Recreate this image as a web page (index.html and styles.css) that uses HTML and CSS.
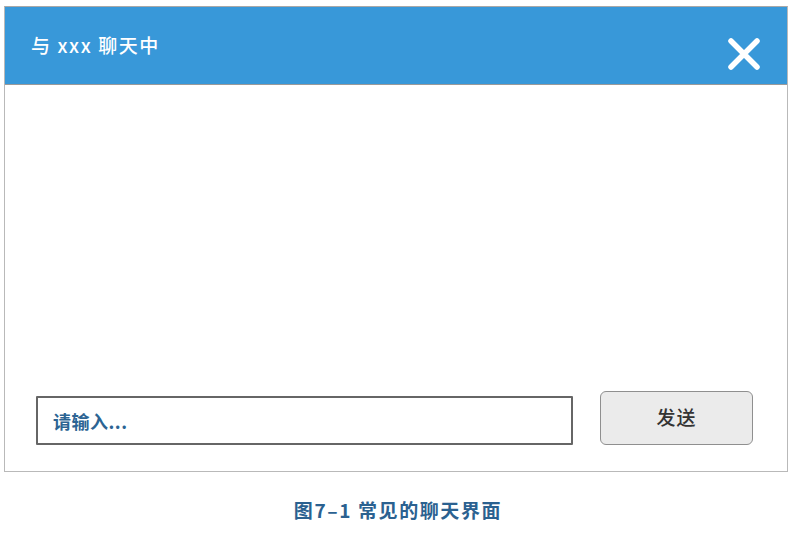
FILE: index.html
```html
<!DOCTYPE html>
<html lang="zh">
<head>
<meta charset="utf-8">
<link rel="stylesheet" href="styles.css">
</head>
<body>
<div class="page">
  <div class="window">
    <div class="header">
      <span class="title">与 xxx 聊天中</span>
      <svg class="close" width="34" height="34" viewBox="0 0 34 34">
        <path d="M4 4 L30 30 M30 4 L4 30" stroke="#fff" stroke-width="5.5" stroke-linecap="round" fill="none"/>
      </svg>
    </div>
    <div class="body">
      <div class="messages"></div>
      <div class="composer">
        <div class="input">请输入...</div>
        <div class="send">发送</div>
      </div>
    </div>
  </div>
  <div class="caption">图7–1 常见的聊天界面</div>
</div>
</body>
</html>
```
FILE: styles.css
```css
html, body {
  margin: 0;
  padding: 0;
  background: #fff;
}
body {
  font-family: "Noto Sans CJK SC", "Noto Sans", sans-serif;
}
.page {
  width: 794px;
  height: 534px;
  padding-top: 6px;
  box-sizing: border-box;
}
.window {
  margin-left: 4px;
  width: 784px;
  height: 466px;
  box-sizing: border-box;
  border: 1px solid #b9b9b9;
  border-top-color: #a8a8a8;
  display: flex;
  flex-direction: column;
}
.header {
  height: 78px;
  background: #3898d9;
  border-bottom: 1px solid #9a9a9a;
  display: flex;
  align-items: center;
  justify-content: space-between;
  padding: 0 26px 0 26px;
  box-sizing: border-box;
  flex: none;
}
.title {
  color: #fff;
  font-size: 19px;
  font-weight: 500;
  margin-top: -2px;
  letter-spacing: 1.6px;
}
.close {
  margin-top: 16px;
  display: block;
}
.body {
  flex: 1;
  display: flex;
  flex-direction: column;
  padding: 0 34px 26px 31px;
}
.messages {
  flex: 1;
}
.composer {
  display: flex;
  align-items: flex-end;
  justify-content: space-between;
}
.input {
  width: 537px;
  height: 49px;
  box-sizing: border-box;
  border: 2px solid #666;
  border-radius: 1px;
  padding-left: 15px;
  display: flex;
  align-items: center;
  color: #2c6493;
  font-weight: bold;
  font-size: 18px;
  letter-spacing: 0.5px;
}
.send {
  width: 153px;
  height: 54px;
  box-sizing: border-box;
  border: 1px solid #8f8f8f;
  border-radius: 6px;
  background: #ebebeb;
  color: #333;
  font-size: 19px;
  font-weight: 500;
  display: flex;
  align-items: center;
  justify-content: center;
  padding-bottom: 4px;
  letter-spacing: 1px;
}
.caption {
  text-align: center;
  margin-top: 24px;
  color: #2b6190;
  font-weight: bold;
  font-size: 19px;
  letter-spacing: 1.6px;
  padding-left: 2px;
}
```
